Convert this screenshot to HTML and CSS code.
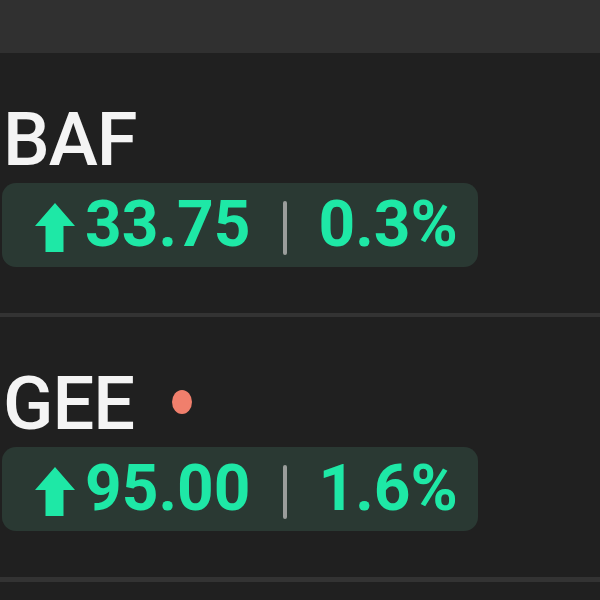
FILE: index.html
```html
<!DOCTYPE html>
<html>
<head>
<meta charset="utf-8">
<link rel="stylesheet" href="styles.css">
</head>
<body>
<div class="topbar"></div>
<div class="list">
  <div class="row row-first">
    <div class="ticker"><span class="sym">BAF</span></div>
    <div class="pill">
      <svg class="arrow" width="40" height="50" viewBox="0 0 40 50"><polygon points="20,0 40,23 28.5,23 28.5,49 10.5,49 10.5,23 0,23" fill="#1ee8a6"/></svg>
      <span class="price">33.75</span>
      <span class="sep"></span>
      <span class="pct">0.3%</span>
    </div>
  </div>
  <div class="divider"></div>
  <div class="row">
    <div class="ticker"><span class="sym">GEE</span><span class="dot"></span></div>
    <div class="pill">
      <svg class="arrow" width="40" height="50" viewBox="0 0 40 50"><polygon points="20,0 40,23 28.5,23 28.5,49 10.5,49 10.5,23 0,23" fill="#1ee8a6"/></svg>
      <span class="price">95.00</span>
      <span class="sep"></span>
      <span class="pct">1.6%</span>
    </div>
  </div>
  <div class="divider divider-2"></div>
</div>
</body>
</html>
```
FILE: styles.css
```css
html, body {
  margin: 0;
  padding: 0;
  background: #202020;
  width: 600px;
  height: 600px;
  overflow: hidden;
  font-family: Roboto, "Liberation Sans", sans-serif;
}
.topbar {
  height: 53px;
  background: #303030;
}
.list {
  display: flex;
  flex-direction: column;
}
.row {
  display: flex;
  flex-direction: column;
  padding-left: 2px;
}
.row-first {
  padding-top: 47px;
}
.ticker {
  display: flex;
  align-items: center;
  height: 80px;
  padding-left: 1px;
}
.sym {
  color: #f4f4f4;
  font-size: 74px;
  line-height: 80px;
  font-weight: 500;
  letter-spacing: -1px;
}
.dot {
  width: 20px;
  height: 24px;
  border-radius: 50%;
  background: #f07f6c;
  margin-left: 38px;
  margin-top: -4px;
}
.pill {
  margin-top: 3px;
  width: 476px;
  height: 84px;
  box-sizing: border-box;
  background: #2a3933;
  border-radius: 14px;
  display: flex;
  align-items: center;
  padding-left: 33px;
  color: #1ee8a6;
  font-weight: 700;
  font-size: 64px;
}
.arrow {
  flex: none;
  margin-top: 6px;
}
.price {
  margin-left: 10px;
  line-height: 84px;
}
.sep {
  width: 4px;
  height: 54px;
  background: #9a9d9b;
  border-radius: 2px;
  margin-left: 33px;
  margin-top: 6px;
}
.pct {
  margin-left: 31px;
  line-height: 84px;
}
.divider {
  height: 4px;
  background: #333333;
  margin-top: 46px;
  margin-bottom: 47px;
}
.divider-2 {
  margin-top: 46px;
  height: 5px;
}
```
